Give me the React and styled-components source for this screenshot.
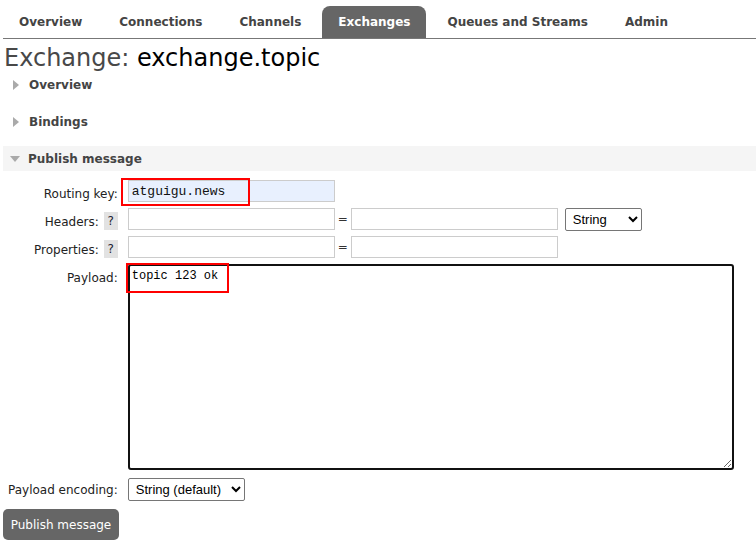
import React from "react";
import styled, { createGlobalStyle } from "styled-components";

const GlobalStyle = createGlobalStyle`
  html, body { margin: 0; padding: 0; background: #fff; }
  body {
    font-family: "DejaVu Sans", Verdana, sans-serif;
    font-size: 12px;
    color: #484848;
  }
`;

const Page = styled.div`
  padding-left: 3px;
`;

const Nav = styled.nav`
  display: flex;
  gap: 5px;
  padding-top: 6px;
  border-bottom: 1px solid #777;
`;

const Tab = styled.a`
  display: flex;
  align-items: center;
  height: 32px;
  padding: 0 16px;
  font-weight: bold;
  font-size: 12px;
  text-decoration: none;
  color: ${(p) => (p.$active ? "#fff" : "#444")};
  background: ${(p) => (p.$active ? "#666" : "transparent")};
  border-radius: 8px 8px 0 0;
`;

const Title = styled.h1`
  margin: 6px 0 0 1px;
  font-size: 24px;
  line-height: 27px;
  font-weight: normal;
  color: #000;
`;

const TitleKey = styled.span`
  color: #484848;
`;

const Section = styled.div`
  margin-top: ${(p) => p.$gap}px;
`;

const SectionHeader = styled.div`
  display: flex;
  align-items: center;
  height: 25px;
  padding-left: ${(p) => (p.$open ? 7 : 10)}px;
  gap: ${(p) => (p.$open ? 8 : 10)}px;
  background: ${(p) => (p.$open ? "#f5f5f5" : "transparent")};
  font-weight: bold;
  font-size: 12px;
  color: #444;
`;

const Arrow = styled.span`
  width: 0;
  height: 0;
  ${(p) =>
    p.$open
      ? `border-left: 5px solid transparent;
         border-right: 5px solid transparent;
         border-top: 6px solid #aaa;
         margin-top: 1px;`
      : `border-top: 5px solid transparent;
         border-bottom: 5px solid transparent;
         border-left: 6px solid #aaa;`}
`;

const Form = styled.div`
  display: grid;
  grid-template-columns: auto 1fr;
  column-gap: 10px;
  row-gap: 6px;
  padding: 9px 0 0 5px;
`;

const Label = styled.div`
  display: flex;
  justify-content: flex-end;
  align-items: flex-start;
  gap: 5px;
  height: ${(p) => p.$h || 22}px;
  padding-top: ${(p) => p.$pt ?? 7}px;
  box-sizing: border-box;
  line-height: 15px;
  color: #222;
  margin-top: ${(p) => p.$mt || 0}px;
`;

const Help = styled.span`
  display: inline-flex;
  align-items: center;
  justify-content: center;
  width: 14px;
  height: 18px;
  margin-top: -3px;
  background: #e2e2e2;
  color: #223;
  font-size: 12px;
`;

const Field = styled.div`
  display: flex;
  align-items: flex-start;
  height: ${(p) => p.$h || 22}px;
  margin-top: ${(p) => p.$mt || 0}px;
`;

const Annotated = styled.div`
  position: relative;
  display: inline-flex;
`;

const RedBox = styled.span`
  position: absolute;
  border: 2px solid #f00;
  pointer-events: none;
`;

const TextInput = styled.input`
  box-sizing: border-box;
  width: 207px;
  height: 22px;
  margin: 0;
  padding: 0 3px;
  border: 1px solid #ccc;
  background: ${(p) => (p.$filled ? "#e8f0fe" : "#fff")};
  font-family: "Liberation Mono", "DejaVu Sans Mono", monospace;
  font-size: 13px;
  color: #111;
  outline: none;
`;

const Eq = styled.span`
  width: 16px;
  text-align: center;
  line-height: 22px;
  color: #333;
  font-size: 12px;
`;

const Select = styled.select`
  box-sizing: border-box;
  width: ${(p) => p.$w}px;
  height: 23px;
  margin: 0 0 0 ${(p) => p.$ml || 0}px;
  padding: 0 2px 0 3px;
  border: 1px solid #767676;
  border-radius: 2px;
  background: #fff;
  font-family: "Liberation Sans", Arial, sans-serif;
  font-size: 13px;
  color: #000;
`;

const Payload = styled.textarea`
  box-sizing: border-box;
  width: 606px;
  height: 206px;
  margin: 0;
  padding: 3px 2px;
  border: 2px solid #111;
  border-radius: 3px;
  font-family: "Liberation Mono", "DejaVu Sans Mono", monospace;
  font-size: 12px;
  line-height: 14px;
  color: #000;
  outline: none;
  resize: both;
`;

const Button = styled.button`
  display: block;
  margin: 9px 0 0;
  width: 116px;
  height: 31px;
  padding: 0;
  border: none;
  border-radius: 5px;
  background: #666;
  color: #fff;
  font-family: "DejaVu Sans", Verdana, sans-serif;
  font-size: 12px;
`;

const tabs = ["Overview", "Connections", "Channels", "Exchanges", "Queues and Streams", "Admin"];

export default function App() {
  return (
    <>
      <GlobalStyle />
      <Page>
        <Nav>
          {tabs.map((t) => (
            <Tab key={t} $active={t === "Exchanges"}>
              {t}
            </Tab>
          ))}
        </Nav>
        <Title>
          <TitleKey>Exchange:</TitleKey> exchange.topic
        </Title>

        <Section $gap={0}>
          <SectionHeader>
            <Arrow />
            Overview
          </SectionHeader>
        </Section>
        <Section $gap={12}>
          <SectionHeader>
            <Arrow />
            Bindings
          </SectionHeader>
        </Section>
        <Section $gap={12}>
          <SectionHeader $open>
            <Arrow $open />
            Publish message
          </SectionHeader>

          <Form>
            <Label>Routing key:</Label>
            <Field>
              <Annotated>
                <TextInput $filled defaultValue="atguigu.news" />
                <RedBox style={{ left: -7, top: -2, width: 125, height: 24 }} />
              </Annotated>
            </Field>

            <Label>
              Headers: <Help>?</Help>
            </Label>
            <Field>
              <TextInput />
              <Eq>=</Eq>
              <TextInput />
              <Select $w={77} $ml={7} defaultValue="String">
                <option>String</option>
                <option>Number</option>
                <option>Boolean</option>
              </Select>
            </Field>

            <Label>
              Properties: <Help>?</Help>
            </Label>
            <Field>
              <TextInput />
              <Eq>=</Eq>
              <TextInput />
            </Field>

            <Label>Payload:</Label>
            <Field $h={206}>
              <Annotated>
                <Payload defaultValue="topic 123 ok" />
                <RedBox style={{ left: -2, top: -1, width: 99, height: 26 }} />
              </Annotated>
            </Field>

            <Label $mt={2} $pt={5}>Payload encoding:</Label>
            <Field $mt={2}>
              <Select $w={117} defaultValue="String (default)">
                <option>String (default)</option>
                <option>Base64</option>
              </Select>
            </Field>
          </Form>
          <Button>Publish message</Button>
        </Section>
      </Page>
    </>
  );
}
